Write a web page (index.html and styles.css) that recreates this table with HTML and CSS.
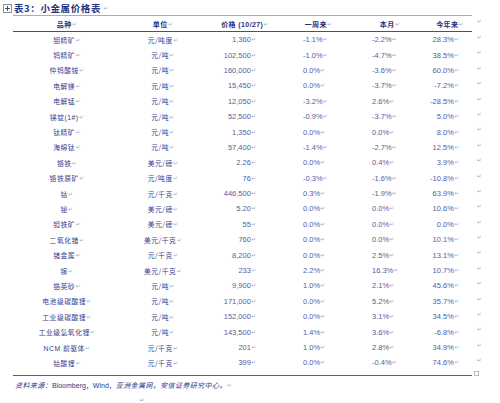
FILE: index.html
```html
<!DOCTYPE html>
<html lang="zh-CN">
<head>
<meta charset="utf-8">
<title>表3：小金属价格表</title>
<link rel="stylesheet" href="styles.css">
</head>
<body>
<div class="page">
  <div class="title">
    <svg class="handle" width="9" height="9" viewBox="0 0 9 9"><rect x="0.5" y="0.5" width="8" height="8" fill="#fff" stroke="#8a8f9c"/><path d="M4.5 2v5M2 4.5h5" stroke="#4a4f5c" stroke-width="1"/></svg>
    <span class="title-text">表3：小金属价格表</span><span class="pm">↵</span>
  </div>

  <div class="table-area">
    <div class="table">
      <div class="row head">
        <div class="h">品种<span class="pm">↵</span></div>
        <div class="h">单位<span class="pm">↵</span></div>
        <div class="h">价格 (10/27)<span class="pm">↵</span></div>
        <div class="h">一周来<span class="pm">↵</span></div>
        <div class="h">本月<span class="pm">↵</span></div>
        <div class="h">今年来<span class="pm">↵</span></div>
      </div>
      <div class="row"><div class="name">钼精矿<span class="pm">↵</span></div><div class="unit">元/吨度<span class="pm">↵</span></div><div class="price">1,360<span class="pm">↵</span></div><div class="wk">-1.1%<span class="pm">↵</span></div><div class="mo">-2.2%<span class="pm">↵</span></div><div class="yr">28.3%<span class="pm">↵</span></div></div>
      <div class="row"><div class="name">钨精矿<span class="pm">↵</span></div><div class="unit">元/吨<span class="pm">↵</span></div><div class="price">102,500<span class="pm">↵</span></div><div class="wk">-1.0%<span class="pm">↵</span></div><div class="mo">-4.7%<span class="pm">↵</span></div><div class="yr">38.5%<span class="pm">↵</span></div></div>
      <div class="row"><div class="name">仲钨酸铵<span class="pm">↵</span></div><div class="unit">元/吨<span class="pm">↵</span></div><div class="price">160,000<span class="pm">↵</span></div><div class="wk">0.0%<span class="pm">↵</span></div><div class="mo">-3.6%<span class="pm">↵</span></div><div class="yr">60.0%<span class="pm">↵</span></div></div>
      <div class="row"><div class="name">电解镁<span class="pm">↵</span></div><div class="unit">元/吨<span class="pm">↵</span></div><div class="price">15,450<span class="pm">↵</span></div><div class="wk">0.0%<span class="pm">↵</span></div><div class="mo">-3.7%<span class="pm">↵</span></div><div class="yr">-7.2%<span class="pm">↵</span></div></div>
      <div class="row"><div class="name">电解锰<span class="pm">↵</span></div><div class="unit">元/吨<span class="pm">↵</span></div><div class="price">12,050<span class="pm">↵</span></div><div class="wk">-3.2%<span class="pm">↵</span></div><div class="mo">2.6%<span class="pm">↵</span></div><div class="yr">-28.5%<span class="pm">↵</span></div></div>
      <div class="row"><div class="name">锑锭(1#)<span class="pm">↵</span></div><div class="unit">元/吨<span class="pm">↵</span></div><div class="price">52,500<span class="pm">↵</span></div><div class="wk">-0.9%<span class="pm">↵</span></div><div class="mo">-3.7%<span class="pm">↵</span></div><div class="yr">5.0%<span class="pm">↵</span></div></div>
      <div class="row"><div class="name">钛精矿<span class="pm">↵</span></div><div class="unit">元/吨<span class="pm">↵</span></div><div class="price">1,350<span class="pm">↵</span></div><div class="wk">0.0%<span class="pm">↵</span></div><div class="mo">0.0%<span class="pm">↵</span></div><div class="yr">8.0%<span class="pm">↵</span></div></div>
      <div class="row"><div class="name">海绵钛<span class="pm">↵</span></div><div class="unit">元/吨<span class="pm">↵</span></div><div class="price">57,400<span class="pm">↵</span></div><div class="wk">-1.4%<span class="pm">↵</span></div><div class="mo">-2.7%<span class="pm">↵</span></div><div class="yr">12.5%<span class="pm">↵</span></div></div>
      <div class="row"><div class="name">铬铁<span class="pm">↵</span></div><div class="unit">美元/磅<span class="pm">↵</span></div><div class="price">2.26<span class="pm">↵</span></div><div class="wk">0.0%<span class="pm">↵</span></div><div class="mo">0.4%<span class="pm">↵</span></div><div class="yr">3.9%<span class="pm">↵</span></div></div>
      <div class="row"><div class="name">铬铁原矿<span class="pm">↵</span></div><div class="unit">元/吨度<span class="pm">↵</span></div><div class="price">76<span class="pm">↵</span></div><div class="wk">-0.3%<span class="pm">↵</span></div><div class="mo">-1.6%<span class="pm">↵</span></div><div class="yr">-10.8%<span class="pm">↵</span></div></div>
      <div class="row"><div class="name">钴<span class="pm">↵</span></div><div class="unit">元/千克<span class="pm">↵</span></div><div class="price">446,500<span class="pm">↵</span></div><div class="wk">0.3%<span class="pm">↵</span></div><div class="mo">-1.9%<span class="pm">↵</span></div><div class="yr">63.9%<span class="pm">↵</span></div></div>
      <div class="row"><div class="name">铋<span class="pm">↵</span></div><div class="unit">美元/磅<span class="pm">↵</span></div><div class="price">5.20<span class="pm">↵</span></div><div class="wk">0.0%<span class="pm">↵</span></div><div class="mo">0.0%<span class="pm">↵</span></div><div class="yr">10.6%<span class="pm">↵</span></div></div>
      <div class="row"><div class="name">钽铁矿<span class="pm">↵</span></div><div class="unit">美元/磅<span class="pm">↵</span></div><div class="price">55<span class="pm">↵</span></div><div class="wk">0.0%<span class="pm">↵</span></div><div class="mo">0.0%<span class="pm">↵</span></div><div class="yr">0.0%<span class="pm">↵</span></div></div>
      <div class="row"><div class="name">二氧化锗<span class="pm">↵</span></div><div class="unit">美元/千克<span class="pm">↵</span></div><div class="price">760<span class="pm">↵</span></div><div class="wk">0.0%<span class="pm">↵</span></div><div class="mo">0.0%<span class="pm">↵</span></div><div class="yr">10.1%<span class="pm">↵</span></div></div>
      <div class="row"><div class="name">锗金属<span class="pm">↵</span></div><div class="unit">元/千克<span class="pm">↵</span></div><div class="price">8,200<span class="pm">↵</span></div><div class="wk">0.0%<span class="pm">↵</span></div><div class="mo">2.5%<span class="pm">↵</span></div><div class="yr">13.1%<span class="pm">↵</span></div></div>
      <div class="row"><div class="name">镓<span class="pm">↵</span></div><div class="unit">美元/千克<span class="pm">↵</span></div><div class="price">233<span class="pm">↵</span></div><div class="wk">2.2%<span class="pm">↵</span></div><div class="mo">16.3%<span class="pm">↵</span></div><div class="yr">10.7%<span class="pm">↵</span></div></div>
      <div class="row"><div class="name">锆英砂<span class="pm">↵</span></div><div class="unit">元/吨<span class="pm">↵</span></div><div class="price">9,900<span class="pm">↵</span></div><div class="wk">1.0%<span class="pm">↵</span></div><div class="mo">2.1%<span class="pm">↵</span></div><div class="yr">45.6%<span class="pm">↵</span></div></div>
      <div class="row"><div class="name">电池级碳酸锂<span class="pm">↵</span></div><div class="unit">元/吨<span class="pm">↵</span></div><div class="price">171,000<span class="pm">↵</span></div><div class="wk">0.0%<span class="pm">↵</span></div><div class="mo">5.2%<span class="pm">↵</span></div><div class="yr">35.7%<span class="pm">↵</span></div></div>
      <div class="row"><div class="name">工业级碳酸锂<span class="pm">↵</span></div><div class="unit">元/吨<span class="pm">↵</span></div><div class="price">152,000<span class="pm">↵</span></div><div class="wk">0.0%<span class="pm">↵</span></div><div class="mo">3.1%<span class="pm">↵</span></div><div class="yr">34.5%<span class="pm">↵</span></div></div>
      <div class="row"><div class="name">工业级氢氧化锂<span class="pm">↵</span></div><div class="unit">元/吨<span class="pm">↵</span></div><div class="price">143,500<span class="pm">↵</span></div><div class="wk">1.4%<span class="pm">↵</span></div><div class="mo">3.6%<span class="pm">↵</span></div><div class="yr">-6.8%<span class="pm">↵</span></div></div>
      <div class="row"><div class="name">NCM 前驱体<span class="pm">↵</span></div><div class="unit">元/千克<span class="pm">↵</span></div><div class="price">201<span class="pm">↵</span></div><div class="wk">1.0%<span class="pm">↵</span></div><div class="mo">2.8%<span class="pm">↵</span></div><div class="yr">34.9%<span class="pm">↵</span></div></div>
      <div class="row"><div class="name">钴酸锂<span class="pm">↵</span></div><div class="unit">元/千克<span class="pm">↵</span></div><div class="price">399<span class="pm">↵</span></div><div class="wk">0.0%<span class="pm">↵</span></div><div class="mo">-0.4%<span class="pm">↵</span></div><div class="yr">74.6%<span class="pm">↵</span></div></div>
    </div>
    <div class="marks">
      <span class="mk mk-head">↵</span>
      <span class="mk">↵</span><span class="mk">↵</span><span class="mk">↵</span><span class="mk">↵</span><span class="mk">↵</span><span class="mk">↵</span>
      <span class="mk">↵</span><span class="mk">↵</span><span class="mk">↵</span><span class="mk">↵</span><span class="mk">↵</span><span class="mk">↵</span>
      <span class="mk">↵</span><span class="mk">↵</span><span class="mk">↵</span><span class="mk">↵</span><span class="mk">↵</span><span class="mk">↵</span>
      <span class="mk">↵</span><span class="mk">↵</span><span class="mk">↵</span><span class="mk">↵</span>
      <span class="resize"></span>
    </div>
  </div>

  <p class="source"><span class="kai">资料来源：</span>Bloomberg，Wind，<span class="kai">亚洲金属网，安信证券研究中心。</span><span class="pm">↵</span></p>
  <p class="last"><span class="pm">↵</span></p>
</div>
</body>
</html>
```

FILE: styles.css
```css
html, body {
  margin: 0;
  padding: 0;
  background: #ffffff;
}

body {
  font-family: "Liberation Sans", "Noto Sans CJK SC", sans-serif;
  color: #545d9e;
}

.page {
  width: 500px;
  height: 403px;
  overflow: hidden;
}

.title {
  display: flex;
  align-items: center;
  height: 15px;
  padding-left: 3px;
  gap: 2px;
}

.handle {
  display: block;
  margin-top: 2px;
}

.title-text {
  font-family: "Noto Sans CJK SC", sans-serif;
  font-size: 9.5px;
  font-weight: 700;
  color: #26327e;
  letter-spacing: 0.6px;
}

.pm {
  font-family: "DejaVu Sans", sans-serif;
  font-size: 5.5px;
  color: #a3a8c6;
  font-weight: 400;
  font-style: normal;
  margin-left: 0.5px;
  vertical-align: 1px;
}

.table-area {
  display: flex;
  padding-left: 13px;
}

.table {
  width: 459px;
  border-top: 1.5px solid #a9adb9;
  border-bottom: 1.5px solid #5a5f6b;
}

.row {
  display: grid;
  grid-template-columns: 108px 84px 80px 67px 76px 44px;
  height: 15.4px;
  align-items: center;
  font-size: 7.5px;
  white-space: nowrap;
}

.row.head {
  height: 15px;
  border-bottom: 1.5px solid #4b5267;
}

.h {
  text-align: center;
  font-family: "Liberation Sans", "Noto Sans CJK SC", sans-serif;
  font-size: 7px;
  font-weight: 700;
  color: #263180;
  letter-spacing: 0.4px;
}

.name, .unit {
  text-align: center;
  font-family: "Noto Sans CJK SC", sans-serif;
  font-size: 6.8px;
  color: #36418f;
  letter-spacing: 0.5px;
}

.name {
  font-family: "Liberation Sans", "Noto Sans CJK SC", sans-serif;
}

.price {
  text-align: right;
  padding-right: 29px;
}

.wk {
  padding-left: 18px;
}

.mo {
  padding-left: 20px;
}

.yr {
  text-align: right;
  padding-right: 13px;
}

.marks {
  display: flex;
  flex-direction: column;
  padding-left: 5px;
  padding-top: 1.5px;
}

.mk {
  font-family: "DejaVu Sans", sans-serif;
  font-size: 5.5px;
  color: #a3a8c0;
  height: 15.4px;
  line-height: 8px;
}

.mk-head {
  height: 16.5px;
}

.resize {
  width: 3px;
  height: 3px;
  border: 1px solid #b9bdc8;
  margin-top: -1px;
  margin-left: -3px;
}

.source {
  margin: 4px 0 0 0;
  padding-left: 15px;
  font-size: 7px;
  line-height: 10px;
  color: #2d388a;
  white-space: nowrap;
}

.kai {
  font-family: "Noto Sans CJK SC", sans-serif;
  font-style: italic;
  letter-spacing: 0.4px;
}

.last {
  margin: 2px 0 0 0;
  padding-left: 139px;
  line-height: 10px;
}

.last .pm {
  font-size: 6px;
}
```
